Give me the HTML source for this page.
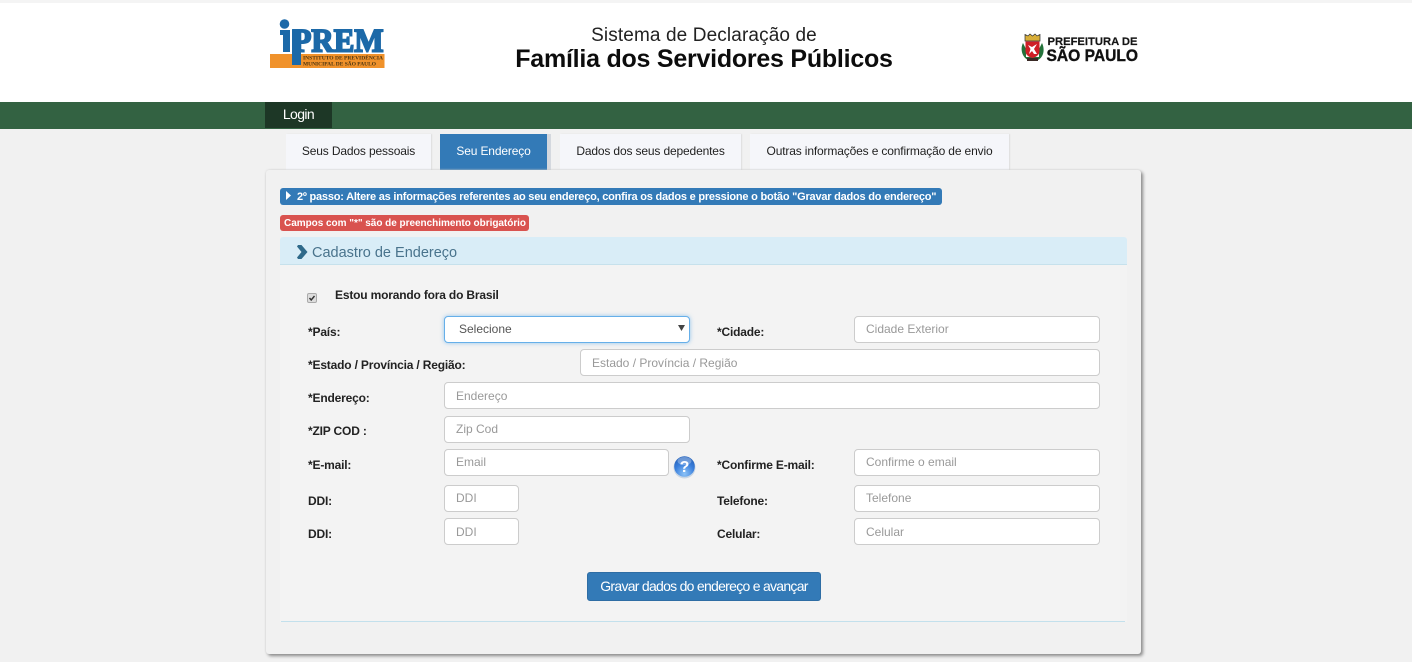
<!DOCTYPE html>
<html lang="pt-BR">
<head>
<meta charset="utf-8">
<title>Sistema de Declaração de Família dos Servidores Públicos</title>
<style>
html,body{margin:0;padding:0;}
body{width:1412px;height:662px;overflow:hidden;position:relative;background:#f1f1f1;font-family:"Liberation Sans",Arial,sans-serif;color:#111;}
.a{position:absolute;white-space:nowrap;}
.tab{position:absolute;top:134px;height:36px;background:#f5f6fa;font-size:12px;line-height:34px;text-align:center;color:#222;box-shadow:1px 0 1px #ddd;letter-spacing:-.15px;}
.lbl{position:absolute;white-space:nowrap;font-size:12px;font-weight:bold;color:#222;line-height:14px;letter-spacing:-.18px;}
.inp{position:absolute;box-sizing:border-box;background:#fff;border:1px solid #ccc;border-radius:4px;height:27px;font-size:12px;line-height:25px;color:#999;padding-left:11px;white-space:nowrap;}
</style>
</head>
<body>
<div class="a" style="left:0;top:0;width:1412px;height:102px;background:#fff;"></div>
<div class="a" style="left:0;top:0;width:1412px;height:3px;background:#f4f4f4;"></div>

<!-- IPREM logo -->
<svg class="a" style="left:268px;top:17px;" width="120" height="54" viewBox="268 17 120 54">
<rect x="270" y="54" width="114.500" height="14" fill="#f0922b"/>
<circle cx="284.500" cy="24" r="4.800" fill="#1c69a8"/>
<path d="M280 30H290V52H283V35H280Z" fill="#1c69a8"/>
<rect x="292" y="29.500" width="9" height="35.500" fill="#1c69a8"/>
<text x="292.500" y="51.500" font-family="Liberation Serif,serif" font-size="33" font-weight="bold" fill="#1c69a8" stroke="#1c69a8" stroke-width="1.900" textLength="91" lengthAdjust="spacingAndGlyphs">PREM</text>
<text x="303" y="59.500" font-family="Liberation Serif,serif" font-size="5.600" font-weight="bold" fill="#4a3410" textLength="80" lengthAdjust="spacingAndGlyphs">INSTITUTO DE PREVIDÊNCIA</text>
<text x="303" y="65.500" font-family="Liberation Serif,serif" font-size="5.600" font-weight="bold" fill="#4a3410" textLength="73" lengthAdjust="spacingAndGlyphs">MUNICIPAL DE SÃO PAULO</text>
</svg>

<div class="a" style="left:404px;width:600px;top:25px;text-align:center;font-size:19px;line-height:21px;color:#222;letter-spacing:.12px;">Sistema de Declaração de</div>
<div class="a" style="left:404px;width:600px;top:44px;text-align:center;font-size:25px;line-height:30px;font-weight:bold;color:#0c0c0c;letter-spacing:-.24px;">Família dos Servidores Públicos</div>

<!-- Prefeitura logo -->
<svg class="a" style="left:1020px;top:32px;" width="122" height="32" viewBox="1020 32 122 32">
<path d="M1023 43C1020 49 1022 57 1028 60H1038C1044 57 1045 49 1042 43L1039 49V57H1026V49Z" fill="#23723a"/>
<path d="M1025 34.500L1028 36L1030 34L1032.500 36L1035 34L1037 36L1040 34.500L1040 41H1025Z" fill="#d8ae38" stroke="#333" stroke-width=".7"/>
<path d="M1025.500 41.500H1039.500V51Q1039.500 56 1032.500 58Q1025.500 56 1025.500 51Z" fill="#cf1f26"/>
<path d="M1028 45L1032 47L1037 44L1034 49L1037 54H1034L1032 51L1029 54L1030.500 49Z" fill="#fff"/>
<rect x="1027" y="58" width="11" height="3" fill="#3a2a26"/>
<text x="1047.500" y="45" font-family="Liberation Sans,sans-serif" font-size="11" font-weight="bold" fill="#151515" stroke="#151515" stroke-width=".2" textLength="90" lengthAdjust="spacingAndGlyphs">PREFEITURA DE</text>
<text x="1046.500" y="61" font-family="Liberation Sans,sans-serif" font-size="17" font-weight="bold" fill="#111" stroke="#111" stroke-width=".4" textLength="91.500" lengthAdjust="spacingAndGlyphs">SÃO PAULO</text>
</svg>

<!-- Nav -->
<div class="a" style="left:0;top:102px;width:1412px;height:27px;background:#336242;"></div>
<div class="a" style="left:265px;top:102px;width:67px;height:26px;background:#1d3726;color:#fff;font-size:14px;line-height:25px;text-align:center;letter-spacing:-.6px;">Login</div>

<!-- Tabs -->
<div class="tab" style="left:286px;width:145px;">Seus Dados pessoais</div>
<div class="tab" style="left:440px;width:107px;background:#337ab7;color:#fff;line-height:35px;box-shadow:4px 0 0 #d4d8de;">Seu Endereço</div>
<div class="tab" style="left:560px;width:181px;">Dados dos seus depedentes</div>
<div class="tab" style="left:750px;width:259px;">Outras informações e confirmação de envio</div>

<!-- Panel -->
<div class="a" style="left:266px;top:170px;width:875px;height:484px;background:#f1f1f1;border-radius:3px;box-shadow:2px 2px 3px #8a8a8a,0 0 2px #d4d4d4;"></div>
<div class="a" style="left:280px;top:265px;width:847px;height:357px;background:#f3f3f3;"></div>
<div class="a" style="left:281px;top:621px;width:844px;height:1px;background:#c3e0ec;"></div>

<div class="a" style="left:280px;top:188px;width:662px;height:17px;background:#337ab7;border-radius:3px;color:#fff;font-size:11px;font-weight:bold;line-height:17px;">
<svg class="a" style="left:6px;top:3px;" width="6" height="9" viewBox="0 0 6 9"><path d="M0 0L5 4.500L0 9Z" fill="#fff"/></svg>
<span class="a" style="left:17px;top:1px;letter-spacing:-.22px;">2º passo: Altere as informações referentes ao seu endereço, confira os dados e pressione o botão "Gravar dados do endereço"</span>
</div>
<div class="a" style="left:280px;top:215px;width:249px;height:16px;background:#d9534f;border-radius:3px;color:#fff;font-size:10px;font-weight:bold;line-height:18px;text-indent:4px;letter-spacing:-.03px;">Campos com "*" são de preenchimento obrigatório</div>

<div class="a" style="left:280px;top:237px;width:847px;height:28px;box-sizing:border-box;background:#d9edf7;border-bottom:1px solid #c6e1ec;border-radius:3px 3px 0 0;"></div>
<svg class="a" style="left:297px;top:245px;" width="11" height="14" viewBox="0 0 11 14"><path d="M1 0H4.500L10.500 7L4.500 14H1L0 12.500L4.500 7L0 1.500Z" fill="#2f6a8a"/></svg>
<div class="a" style="left:312px;top:244px;font-size:14.500px;line-height:18px;color:#49738c;">Cadastro de Endereço</div>

<!-- Checkbox -->
<div class="a" style="left:307px;top:293px;width:8px;height:8px;background:#ddd;border:1px solid #aaa;border-radius:2px;"></div>
<svg class="a" style="left:307px;top:293px;" width="10" height="10" viewBox="0 0 10 10"><path d="M2.500 5L4.200 7L7.500 3" fill="none" stroke="#333" stroke-width="1.400"/></svg>
<div class="lbl" style="left:335px;top:288px;">Estou morando fora do Brasil</div>

<!-- Form -->
<div class="lbl" style="left:308px;top:325px;">*País:</div>
<div class="inp" style="left:444px;top:316px;width:246px;border-color:#66afe9;box-shadow:0 0 4px rgba(102,175,233,.7);color:#555;padding-left:14px;">Selecione</div>
<svg class="a" style="left:678px;top:325px;" width="8" height="7" viewBox="0 0 8 7"><path d="M0 0H7L3.500 6Z" fill="#444"/></svg>
<div class="lbl" style="left:717px;top:325px;">*Cidade:</div>
<div class="inp" style="left:854px;top:316px;width:246px;">Cidade Exterior</div>

<div class="lbl" style="left:308px;top:358px;">*Estado / Província / Região:</div>
<div class="inp" style="left:580px;top:349px;width:520px;line-height:27px;">Estado / Província / Região</div>

<div class="lbl" style="left:308px;top:391px;">*Endereço:</div>
<div class="inp" style="left:444px;top:382px;width:656px;line-height:27px;">Endereço</div>

<div class="lbl" style="left:308px;top:424px;">*ZIP COD :</div>
<div class="inp" style="left:444px;top:416px;width:246px;">Zip Cod</div>

<div class="lbl" style="left:308px;top:458px;">*E-mail:</div>
<div class="inp" style="left:444px;top:449px;width:225px;">Email</div>
<svg class="a" style="left:673px;top:455px;" width="23" height="24" viewBox="0 0 23 24">
<defs><radialGradient id="q" cx="50%" cy="85%" r="75%"><stop offset="0" stop-color="#8cc3f7"/><stop offset=".65" stop-color="#3a7fdc"/><stop offset="1" stop-color="#2a68c0"/></radialGradient></defs>
<circle cx="11.500" cy="12.500" r="11" fill="#c9d6e4"/>
<circle cx="11.500" cy="11.500" r="10.300" fill="url(#q)"/>
<ellipse cx="11.500" cy="6" rx="7" ry="4" fill="#fff" opacity=".3"/>
<text x="11.500" y="17" text-anchor="middle" font-family="Liberation Sans,sans-serif" font-size="16" font-weight="bold" fill="#fff">?</text>
</svg>
<div class="lbl" style="left:717px;top:458px;">*Confirme E-mail:</div>
<div class="inp" style="left:854px;top:449px;width:246px;">Confirme o email</div>

<div class="lbl" style="left:308px;top:494px;">DDI:</div>
<div class="inp" style="left:444px;top:485px;width:75px;">DDI</div>
<div class="lbl" style="left:717px;top:494px;">Telefone:</div>
<div class="inp" style="left:854px;top:485px;width:246px;">Telefone</div>

<div class="lbl" style="left:308px;top:527px;">DDI:</div>
<div class="inp" style="left:444px;top:518px;width:75px;line-height:27px;">DDI</div>
<div class="lbl" style="left:717px;top:527px;">Celular:</div>
<div class="inp" style="left:854px;top:518px;width:246px;line-height:27px;">Celular</div>

<div class="a" style="left:587px;top:572px;width:234px;height:29px;box-sizing:border-box;background:#337ab7;border:1px solid #2e6da4;border-radius:3px;color:#fff;font-size:14px;line-height:26px;text-align:center;letter-spacing:-.72px;">Gravar dados do endereço e avançar</div>
</body>
</html>
